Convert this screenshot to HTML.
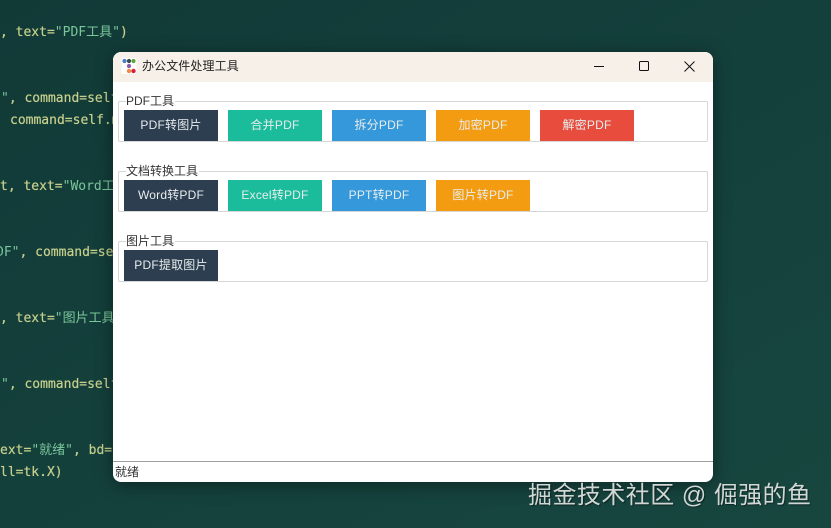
<!DOCTYPE html>
<html>
<head>
<meta charset="utf-8">
<style>
html,body{margin:0;padding:0}
body{width:831px;height:528px;overflow:hidden;position:relative;background:linear-gradient(150deg,#113a37 0%,#14403c 50%,#17463f 100%);font-family:"Liberation Sans","Noto Sans CJK SC",sans-serif}
.c{position:absolute;font:13px/18px "DejaVu Sans Mono","Noto Sans CJK SC",monospace;color:#c6cf8c;white-space:pre;text-shadow:0 0 .5px #c6cf8c}
.c b{font-weight:normal;color:#7cc79c;text-shadow:none}
.win{position:absolute;left:113px;top:52px;width:600px;height:430px;background:#fff;border-radius:8px;overflow:hidden;box-shadow:0 3px 18px rgba(0,0,0,.4)}
.tb{position:absolute;left:0;top:0;width:600px;height:30px;background:#f7f0e8}
.title{position:absolute;left:29px;top:5px;font-size:12px;line-height:18px;color:#222;letter-spacing:.1px}
.grp{position:absolute;left:5px;width:588px;height:39px;border:1px solid #d6d6d6;border-radius:2px}
.lab{position:absolute;left:13px;font-size:12px;line-height:14px;background:#fff;color:#333;padding-right:1px}
.btn{position:absolute;width:94px;height:31px;line-height:31px;text-align:center;color:#e8eded;font-size:12px;letter-spacing:.2px}
.n{background:#2c3e50}.t{background:#1abc9c}.b{background:#3498db}.o{background:#f39c12}.r{background:#e74c3c}
.st{position:absolute;left:0;top:409px;width:600px;height:1px;background:#a0a0a0}
.stt{position:absolute;left:2px;top:411px;font-size:12px;line-height:18px;color:#333}
.wm{position:absolute;left:528px;top:480px;font-size:24px;line-height:32px;color:#d0d7d4;white-space:nowrap;letter-spacing:.45px;text-shadow:1px 1px 1px rgba(0,0,0,.45)}
</style>
</head>
<body>
<div class="c" style="left:0;top:24px">, text=<b>"PDF工具"</b>)</div>
<div class="c" style="left:1px;top:90px"><b>"</b>, command=self.</div>
<div class="c" style="left:10px;top:112px">command=self.m</div>
<div class="c" style="left:0;top:178px">t, text=<b>"Word工具"</b></div>
<div class="c" style="left:-4px;top:244px"><b>DF"</b>, command=self</div>
<div class="c" style="left:0;top:310px">, text=<b>"图片工具"</b></div>
<div class="c" style="left:1px;top:376px"><b>"</b>, command=self.</div>
<div class="c" style="left:0;top:442px">ext=<b>"就绪"</b>, bd=1</div>
<div class="c" style="left:0;top:464px">ll=tk.X)</div>

<div class="win">
  <div class="tb"></div>
  <svg style="position:absolute;left:8px;top:5px" width="17" height="18" viewBox="0 0 17 18">
    <rect x="0.5" y="1" width="15" height="16" rx="2" fill="#fff"/>
    <circle cx="3.5" cy="4" r="2.1" fill="#4a7fc4"/>
    <circle cx="8" cy="4" r="2.1" fill="#3a4a50"/>
    <circle cx="12.5" cy="4" r="2.1" fill="#5aa83c"/>
    <circle cx="8" cy="9" r="2.1" fill="#8a5cb0"/>
    <circle cx="8" cy="14" r="2.2" fill="#ee8a3c"/>
    <circle cx="12.5" cy="14" r="2.2" fill="#d8203c"/>
  </svg>
  <div class="title">办公文件处理工具</div>
  <svg style="position:absolute;left:480px;top:5px" width="105" height="20" viewBox="0 0 105 20" fill="none" stroke="#111" stroke-width="1">
    <path d="M1 9.5H11"/>
    <rect x="46.5" y="4.5" width="9" height="9" rx="1"/>
    <path d="M91.5 4.5L101.5 14.5M101.5 4.5L91.5 14.5"/>
  </svg>

  <div class="grp" style="top:49px"></div>
  <div class="lab" style="top:42px">PDF工具</div>
  <div class="btn n" style="left:11px;top:58px">PDF转图片</div>
  <div class="btn t" style="left:115px;top:58px">合并PDF</div>
  <div class="btn b" style="left:219px;top:58px">拆分PDF</div>
  <div class="btn o" style="left:323px;top:58px">加密PDF</div>
  <div class="btn r" style="left:427px;top:58px">解密PDF</div>

  <div class="grp" style="top:119px"></div>
  <div class="lab" style="top:112px">文档转换工具</div>
  <div class="btn n" style="left:11px;top:128px">Word转PDF</div>
  <div class="btn t" style="left:115px;top:128px">Excel转PDF</div>
  <div class="btn b" style="left:219px;top:128px">PPT转PDF</div>
  <div class="btn o" style="left:323px;top:128px">图片转PDF</div>

  <div class="grp" style="top:189px"></div>
  <div class="lab" style="top:182px">图片工具</div>
  <div class="btn n" style="left:11px;top:198px">PDF提取图片</div>

  <div class="st"></div>
  <div class="stt">就绪</div>
</div>
<div class="wm">掘金技术社区 @ 倔强的鱼</div>
</body>
</html>
